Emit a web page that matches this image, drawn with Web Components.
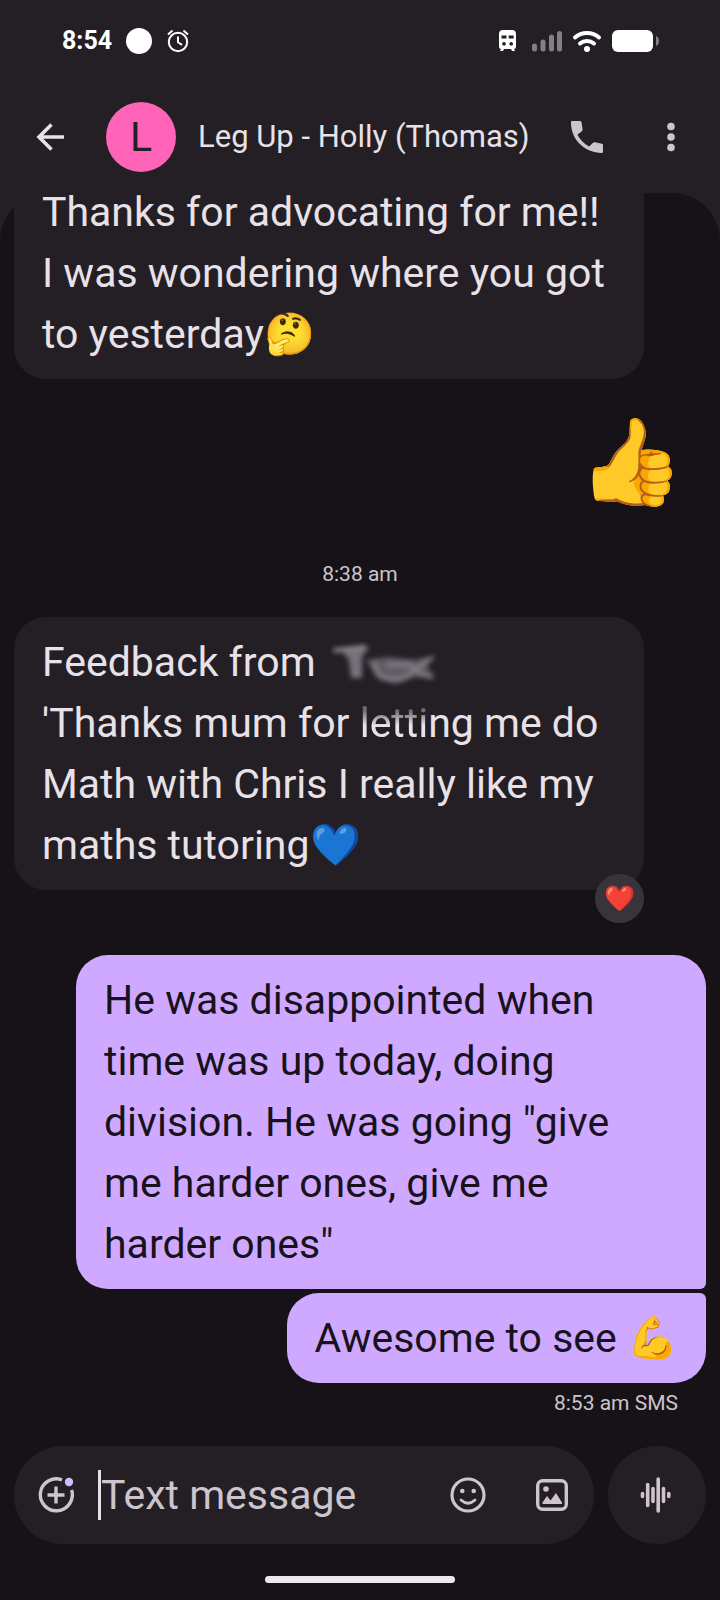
<!DOCTYPE html>
<html lang="en">
<head>
<meta charset="utf-8">
<meta name="viewport" content="width=device-width, initial-scale=1">
<title>Messages</title>
<style>
  html { background: #161217; }
  body { margin: 0; font-family: Roboto, "Noto Sans", sans-serif; color: #e8e1e8; }
</style>
</head>
<body>
<messages-app></messages-app>
<script>
const define = (name, html) => {
  const template = document.createElement('template');
  template.innerHTML = html;
  customElements.define(name, class extends HTMLElement {
    constructor() {
      super();
      this.attachShadow({ mode: 'open' }).append(template.content.cloneNode(true));
    }
  });
};

define('status-bar', `
<style>
  :host { display: flex; align-items: center; justify-content: space-between; height: 82px; padding: 0 60px 0 62px; color: #fff; }
  div { display: flex; align-items: center; }
  .left { gap: 14px; }
  time { font-size: 25px; font-weight: 700; line-height: 28px; }
  .dot { width: 26px; height: 26px; border-radius: 50%; background: #fff; }
  .right { gap: 10px; }
  svg { display: block; }
</style>
<div class="left">
  <time>8:54</time><span class="dot"></span>
  <svg width="24" height="24" viewBox="0 0 24 24" fill="none" stroke="#fff" stroke-width="2"><circle cx="12" cy="13" r="9.2"/><path d="M12 7.5v5.8l4 2.6M2 5.5 6.5 1.6M22 5.5 17.500 1.600"/></svg>
</div>
<div class="right">
  <svg width="24" height="24" viewBox="0 0 24 24"><path fill="#fff" fill-rule="evenodd" d="M7 1h9q4 0 4 4v12q0 3-2 3l1 2h-3l-1-2H8l-1 2H4l1-2q-2 0-2-3V5q0-4 4-4ZM5.500 6.500v3h5v-3ZM12.700 6.500v3h5v-3ZM8 13a1.800 1.800 0 1 0 .01 0ZM15.200 13a1.800 1.800 0 1 0 .01 0Z"/></svg>
  <svg width="32" height="24" viewBox="0 0 32 24" stroke="#847f86" stroke-width="5" stroke-linecap="round"><path d="M4.500 17v3M13 13v7M21.500 8v12M29.500 4.500v15.500"/></svg>
  <svg width="30" height="24" viewBox="0 0 30 24" fill="none" stroke="#fff" stroke-width="4" stroke-linecap="round"><path d="M3 8.500Q8 4 15 4t12 4.500M8 14.500Q11 12 15 12t7 2.500"/><circle cx="15" cy="20" r="3" fill="#fff" stroke="none"/></svg>
  <svg width="48" height="24" viewBox="0 0 48 24"><rect y="1" width="41" height="22" rx="6" fill="#fff"/><path d="M44 7q3 1 3 5t-3 5Z" fill="#847f86"/></svg>
</div>`);

define('conversation-header', `
<style>
  :host { display: flex; align-items: center; box-sizing: border-box; height: 111px; padding: 0 31px 2px 32px; }
  button { border: 0; padding: 0; background: none; display: grid; place-items: center; width: 36px; height: 48px; flex: none; }
  .avatar { width: 70px; height: 70px; border-radius: 50%; background: #ff64b8; color: #231f24; font-size: 41px; line-height: 70px; text-align: center; margin: 0 22px 0 38px; flex: none; }
  h1 { flex: 1; margin: 0; font-weight: 400; font-size: 31px; line-height: 40px; white-space: nowrap; overflow: hidden; text-overflow: ellipsis; }
  .call { margin-right: 48px; }
</style>
<button aria-label="Back"><svg width="32" height="32" viewBox="0 0 32 32" fill="none" stroke="#e8e1e8" stroke-width="3.600"><path d="M30 16H5M17.500 3.500 5 16l12.500 12.500"/></svg></button>
<div class="avatar" aria-hidden="true">L</div>
<h1><slot></slot></h1>
<button class="call" aria-label="Call"><svg width="32" height="32" viewBox="3 3 18 18" fill="#cdc4ce"><path d="M6.620 10.790c1.440 2.830 3.760 5.140 6.590 6.590l2.200-2.200c.27-.27.67-.36 1.020-.24l3.970.8c.4.1.6.3.6.6V20.500c0 .4-.2.500-.6.500C10.610 21 3 13.390 3 4c0-.8.2-1 .6-1H8c.5 0 .8.2.9.6L9.500 7.570c.11.35.03.74-.25 1.020z"/></svg></button>
<button aria-label="More options"><svg width="10" height="30" viewBox="0 0 10 30" fill="#cdc4ce"><circle cx="5" cy="4.500" r="3.800"/><circle cx="5" cy="15" r="3.800"/><circle cx="5" cy="25.500" r="3.800"/></svg></button>`);

define('message-bubble', `
<style>
  :host { display: block; position: relative; box-sizing: border-box; width: fit-content; max-width: calc(100% - 62px); padding: 15px 28px 14px; border-radius: 32px; background: #231f24; font-size: 41px; line-height: 61px; }
  :host([sent]) { align-self: flex-end; background: #cfa9ff; color: #17121b; }
  :host([wide]) { width: calc(100% - 62px); }
  :host([joined="below"]) { border-bottom-right-radius: 6px; }
  :host([joined="above"]) { border-top-right-radius: 6px; }
  p { margin: 0; white-space: nowrap; }
</style>
<p><slot></slot></p><slot name="reaction"></slot>`);

define('reaction-badge', `
<style>
  :host { position: absolute; right: 0; bottom: -33px; width: 49px; height: 49px; border-radius: 50%; background: #38343a; display: grid; place-items: center; font-size: 25px; line-height: 30px; }
</style>
<slot></slot>`);

define('smudged-name', `
<style>
  :host { display: inline-block; vertical-align: middle; line-height: 0; margin-left: 4px; }
  svg { display: block; }
</style>
<svg role="img" aria-label="Hidden name" width="112" height="48" viewBox="0 0 112 48" fill="none" stroke="#96919a" stroke-linecap="round">
  <defs><filter id="b" x="-20%" y="-30%" width="140%" height="160%"><feGaussianBlur stdDeviation="2.600"/></filter></defs>
  <g filter="url(#b)"><path stroke-width="4" d="M5 9.500 34 6"/><path fill="#77727a" stroke="none" d="M12 10 40 6 32 15 32 37 21 37 19 19Z"/><path fill="#615c64" stroke="none" d="M36 19 60 16 84 19 104 15 97 25 104 37 84 36 66 43 48 38Z"/><path stroke-width="4" opacity=".6" d="M45 22Q44 35 58 38 76 41 84 29L102 17M58 24 80 23Q88 35 102 36"/></g>
</svg>`);

define('text-composer', `
<style>
  :host { display: flex; gap: 14px; padding: 0 14px; }
  button { border: 0; padding: 0; background: none; display: grid; place-items: center; width: 36px; height: 48px; flex: none; }
  .field { flex: 1; min-width: 0; box-sizing: border-box; height: 98px; border-radius: 49px; background: #231f24; display: flex; align-items: center; padding: 0 24px; }
  input { flex: 1; min-width: 0; height: 50px; margin: 0 24px; padding: 0; border: 0; border-left: 3px solid #e8e1e8; border-radius: 0; background: none; outline: 0; color: #e8e1e8; font: 41px/50px Roboto, "Noto Sans", sans-serif; }
  input::placeholder { color: #cdc4ce; opacity: 1; }
  .emoji { margin-right: 48px; }
  .voice { width: 98px; height: 98px; border-radius: 50%; background: #231f24; }
</style>
<div class="field">
  <button aria-label="Add"><svg width="36" height="36" viewBox="0 0 36 36" fill="none" stroke="#cdc4ce" stroke-width="3.400"><path d="M24 2.800A16 16 0 1 0 33.600 13M18 9.500v17M9.500 18h17"/><circle cx="31" cy="5" r="4.200" fill="#cfbcf8" stroke="none"/></svg></button>
  <input type="text" aria-label="Text message" placeholder="Text message">
  <button class="emoji" aria-label="Emoji"><svg width="36" height="36" viewBox="0 0 36 36" fill="none" stroke="#cdc4ce" stroke-width="3.200"><circle cx="18" cy="18" r="16"/><path stroke-width="2.800" stroke-linecap="round" d="M11 23q7 6.500 14 0"/><g fill="#cdc4ce" stroke="none"><circle cx="12.300" cy="14" r="2.300"/><circle cx="23.700" cy="14" r="2.300"/></g></svg></button>
  <button aria-label="Gallery"><svg width="36" height="36" viewBox="0 0 36 36" fill="none" stroke="#cdc4ce" stroke-width="3.400"><rect x="3.700" y="3.700" width="28.600" height="28.600" rx="5"/><g fill="#cdc4ce" stroke="none"><circle cx="12" cy="12" r="2.800"/><path d="M8.500 27v-1.500l4.500-6.500 3.500 4.500 5.500-7.500 6 9.500V27Z"/></g></svg></button>
</div>
<button class="voice" aria-label="Record voice message"><svg width="36" height="36" viewBox="0 0 36 36" stroke="#cdc4ce" stroke-width="3.600" stroke-linecap="round"><path d="M3.500 16.500v3M8.700 7.500v21M14 11.500v13M19.200 2v32M24.500 11.500v13M29.800 16.500v3"/></svg></button>`);

define('messages-app', `
<style>
  :host { display: flex; flex-direction: column; min-height: 100vh; background: #231f24; }
  main { flex: 1; display: flex; flex-direction: column; border-radius: 48px 48px 0 0; background: #161217; }
  .thread { display: flex; flex-direction: column; align-items: flex-start; padding: 0 14px; }
  .first { margin-top: -12px; padding-top: 1px; border-top-left-radius: 0; border-top-right-radius: 0; }
  .big { align-self: flex-end; margin: 31px 22px 0 0; font-size: 85px; line-height: 104px; }
  .time { align-self: center; margin: 46px 0 29px; font-size: 21px; line-height: 28px; color: #cdc4ce; }
  .reply { margin-top: 65px; }
  .last { margin-top: 4px; }
  .meta { align-self: flex-end; margin: 6px 28px 0 0; font-size: 21px; line-height: 28px; color: #cdc4ce; }
  text-composer { margin-top: auto; }
  .fade { -webkit-mask-image: linear-gradient(#0006 25%, #000 55%); mask-image: linear-gradient(#0006 25%, #000 55%); }
  .home { width: 190px; height: 7px; border-radius: 4px; background: #ece8ec; margin: 32px auto 17px; }
</style>
<status-bar></status-bar>
<conversation-header>Leg Up - Holly (Thomas)</conversation-header>
<main>
  <div class="thread">
    <message-bubble class="first" wide>Thanks for advocating for me!!<br>I was wondering where you got<br>to yesterday🤔</message-bubble>
    <div class="big">👍</div>
    <time class="time">8:38 am</time>
    <message-bubble wide>Feedback from <smudged-name></smudged-name><br>'Thanks mum for <span class="fade">letti</span>ng me do<br>Math with Chris I really like my<br>maths tutoring💙<reaction-badge slot="reaction">❤️</reaction-badge></message-bubble>
    <message-bubble class="reply" sent wide joined="below">He was disappointed when<br>time was up today, doing<br>division. He was going "give<br>me harder ones, give me<br>harder ones"</message-bubble>
    <message-bubble class="last" sent joined="above">Awesome to see 💪</message-bubble>
    <div class="meta">8:53 am SMS</div>
  </div>
  <text-composer></text-composer>
  <div class="home"></div>
</main>`);
</script>
</body>
</html>
